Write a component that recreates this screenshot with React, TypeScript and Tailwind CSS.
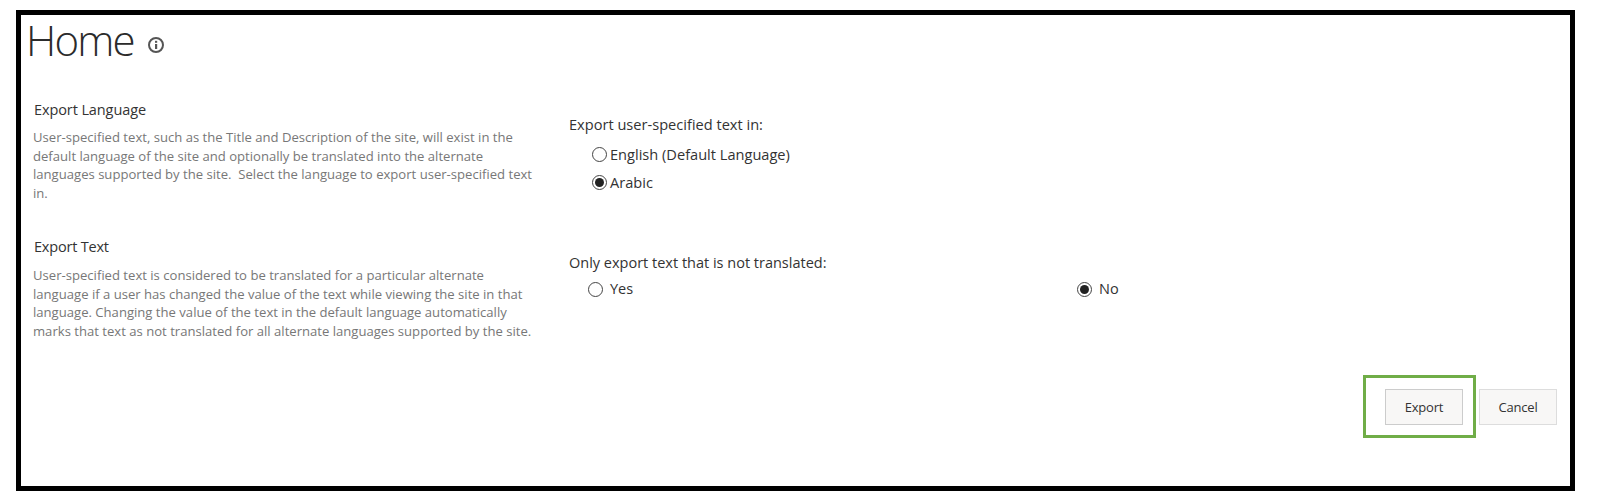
const font = "font-['Open_Sans',sans-serif]";

function Radio({ checked = false }: { checked?: boolean }) {
  return (
    <span className="flex h-[15px] w-[15px] shrink-0 items-center justify-center rounded-full border border-[#444] bg-white">
      {checked && <span className="h-[9px] w-[9px] rounded-full bg-[#222]" />}
    </span>
  );
}

function InfoIcon() {
  return (
    <svg width="18" height="18" viewBox="0 0 18 18" fill="none" className="mt-[8px] ml-[13px]">
      <circle cx="9" cy="9" r="7" stroke="#555" strokeWidth="2" />
      <rect x="8" y="8" width="2.2" height="5" fill="#555" />
      <rect x="8" y="4.8" width="2.2" height="2" fill="#555" />
    </svg>
  );
}

export default function App() {
  return (
    <div className={`h-[491px] w-[1601px] overflow-hidden bg-white pt-[10px] pl-[16px] ${font}`}>
      <div className="h-[481px] w-[1559px] border-[5px] border-black bg-white">
        <div className="flex h-[52px] items-center pl-[5px]">
          <h1 className="-mt-[3px] text-[42px] leading-[52px] font-light tracking-[-1.8px] text-[#2b2b2b]">Home</h1>
          <InfoIcon />
        </div>

        <div className="mt-[33px] flex h-[137px]">
          <div className="w-[548px] shrink-0 pl-[13px]">
            <h2 className="text-[14.5px] leading-[20px] tracking-[-0.1px] text-[#333]">Export Language</h2>
            <p className="mt-[8px] -ml-[1px] w-[505px] text-[13.1px] leading-[18.5px] text-[#777]">
              User-specified text, such as the Title and Description of the site, will exist in the default language of the site and optionally be translated into the alternate languages supported by the site.&nbsp; Select the language to export user-specified text in.
            </p>
          </div>
          <div className="pt-[14px] text-[14.6px] leading-[20px] text-[#333]">
            <div>Export user-specified text in:</div>
            <div className="mt-[10px] flex items-center gap-[3px] pl-[23px]">
              <Radio />
              <span>English (Default Language)</span>
            </div>
            <div className="mt-[8px] flex items-center gap-[3px] pl-[23px]">
              <Radio checked />
              <span>Arabic</span>
            </div>
          </div>
        </div>

        <div className="flex h-[138px]">
          <div className="w-[548px] shrink-0 pl-[13px]">
            <h2 className="text-[14.5px] leading-[20px] tracking-[-0.2px] text-[#333]">Export Text</h2>
            <p className="mt-[9px] -ml-[1px] w-[505px] text-[13.1px] leading-[18.5px] text-[#777]">
              User-specified text is considered to be translated for a particular alternate language if a user has changed the value of the text while viewing the site in that language. Changing the value of the text in the default language automatically marks that text as not translated for all alternate languages supported by the site.
            </p>
          </div>
          <div className="pt-[16px] text-[14.5px] leading-[20px] text-[#333]">
            <div>Only export text that is not translated:</div>
            <div className="mt-[6px] flex w-[560px] pl-[19px]">
              <div className="flex w-[489px] items-center gap-[7px]">
                <Radio />
                <span>Yes</span>
              </div>
              <div className="flex items-center gap-[7px]">
                <Radio checked />
                <span>No</span>
              </div>
            </div>
          </div>
        </div>

        <div className="flex items-start justify-end pr-[13px] text-[13px] text-[#333]">
          <div className="border-[3px] border-[#70ad47] pt-[11px] pr-[10px] pb-[10px] pl-[19px]">
            <button className="h-[36px] w-[78px] border border-[#ccc] bg-[#f8f7f6] pt-[1px] tracking-[-0.2px]">Export</button>
          </div>
          <button className="mt-[14px] ml-[3px] h-[36px] w-[78px] border border-[#ddd] bg-[#f8f7f6] pt-[1px] tracking-[-0.2px]">Cancel</button>
        </div>
      </div>
    </div>
  );
}
